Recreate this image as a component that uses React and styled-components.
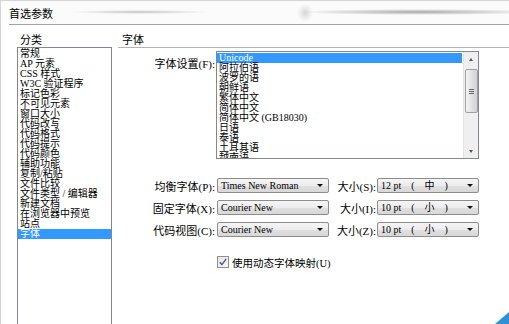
import React from "react"
import styled, { createGlobalStyle } from "styled-components"

const font = `"Liberation Serif", "Noto Sans CJK SC", serif`

const GlobalStyle = createGlobalStyle`
    body {
        margin: 0;
        background: #fff;
    }
`

const Dialog = styled.div`
    position: relative;
    width: 509px;
    height: 324px;
    box-sizing: border-box;
    overflow: hidden;
    border-top: 1px solid #d4d4d4;
    border-left: 1px solid #d4d4d4;
    font-family: ${font};
    font-size: 11px;
    color: #000;
    background: #fff;
`

const TitleBar = styled.div`
    height: 23px;
    margin-left: 8px;
    display: flex;
    align-items: center;
    border-bottom: 1px solid #a2a2a2;
    font-size: 11px;
    background:
        radial-gradient(ellipse 70px 2px at 130px 11px, #c4c4c4, transparent),
        radial-gradient(ellipse 120px 3px at 410px 11px, #a8a8a8, transparent),
        radial-gradient(ellipse 8px 9px at 296px 12px, #d8d8d8, transparent),
        #fbfbfb;
`

const Body = styled.div`
    display: flex;
    gap: 6px;
    padding-left: 16px;
`

const SideColumn = styled.div`
    width: 95px;
    display: flex;
    flex-direction: column;
`

const SectionLabel = styled.div`
    margin-top: 9px;
    height: 13px;
    line-height: 13px;
    padding-left: ${p => p.$indent}px;
    border-bottom: ${p => p.$rule ? "1px solid #b4b4b4" : "none"};
`

const ListBox = styled.div`
    box-sizing: border-box;
    border: 1px solid #828790;
    background: #fff;
    height: ${p => p.$height}px;
    width: ${p => p.$width ? p.$width + "px" : "auto"};
    display: flex;
    overflow: hidden;
`

const Items = styled.div`
    flex: 1;
    display: flex;
    flex-direction: column;
    padding-top: 1px;
`

const Item = styled.div`
    flex: none;
    height: 10px;
    line-height: 10px;
    font-size: 10px;
    padding-left: 2px;
    white-space: pre;
    color: ${p => p.$selected ? "#fff" : "#000"};
    background: ${p => p.$selected ? "#3399ff" : "transparent"};
    margin-right: ${p => p.$selected && p.$inset ? "1px" : "0"};
`

const MainColumn = styled.div`
    flex: 1;
    display: flex;
    flex-direction: column;
`

const Form = styled.div`
    display: flex;
    flex-direction: column;
`

const Row = styled.div`
    display: flex;
    align-items: ${p => p.$top ? "flex-start" : "center"};
    margin-top: ${p => p.$space}px;
    height: ${p => p.$height || 15}px;
`

const Label = styled.div`
    width: ${p => p.$width}px;
    text-align: right;
    white-space: nowrap;
    padding-top: ${p => p.$top ? 4 : 0}px;
    margin-right: ${p => p.$gap || 1}px;
`

const Select = styled.div`
    position: relative;
    box-sizing: border-box;
    width: ${p => p.$width}px;
    height: 15px;
    line-height: 13px;
    font-size: 10px;
    padding-left: 3px;
    border: 1px solid #8d8d8d;
    border-radius: 2px;
    white-space: pre;
    background: linear-gradient(#f6f6f6, #ececec 50%, #e0e0e0 51%, #d8d8d8);
    &::after {
        content: "";
        position: absolute;
        right: 5px;
        top: 5px;
        border-left: 3px solid transparent;
        border-right: 3px solid transparent;
        border-top: 3px solid #111;
    }
`

const Scrollbar = styled.div`
    width: 14px;
    display: flex;
    flex-direction: column;
    align-items: center;
    background: #efefef;
    border-left: 1px solid #e2e2e2;
`

const ArrowButton = styled.div`
    height: 14px;
    width: 14px;
    display: flex;
    align-items: center;
    justify-content: center;
    &::before {
        content: "";
        border-left: 2.5px solid transparent;
        border-right: 2.5px solid transparent;
        ${p => p.$down ? "border-top: 3px solid #555;" : "border-bottom: 3px solid #555;"}
    }
`

const Thumb = styled.div`
    box-sizing: border-box;
    margin-top: 3px;
    width: 13px;
    height: 44px;
    border: 1px solid #a0a0a0;
    border-radius: 2px;
    background: linear-gradient(to right, #f4f4f4, #e0e0e0 55%, #d2d2d2);
    display: flex;
    flex-direction: column;
    align-items: center;
    justify-content: center;
    gap: 1px;
    span {
        width: 5px;
        height: 1px;
        background: #666;
    }
`

const Track = styled.div`
    flex: 1;
`

const CheckRow = styled.label`
    display: flex;
    align-items: center;
    gap: 3px;
    margin-top: 19px;
    margin-left: 99px;
    height: 12px;
    font-size: 10.5px;
`

const Corner = styled.svg`
    position: absolute;
    right: 0;
    bottom: 0;
`

const categories = [
    "常规", "AP 元素", "CSS 样式", "W3C 验证程序", "标记色彩", "不可见元素",
    "窗口大小", "代码改写", "代码格式", "代码提示", "代码颜色", "辅助功能",
    "复制/粘贴", "文件比较", "文件类型 / 编辑器", "新建文档", "在浏览器中预览",
    "站点", "字体",
]

const encodings = [
    "Unicode", "阿拉伯语", "波罗的语", "朝鲜语", "繁体中文", "简体中文",
    "简体中文 (GB18030)", "日语", "泰语", "土耳其语", "越南语",
]

const fontRows = [
    { label: "均衡字体(P):", face: "Times New Roman", size: "大小(S):", value: "12 pt\u3000(\u3000中\u3000)" },
    { label: "固定字体(X):", face: "Courier New", size: "大小(I):", value: "10 pt\u3000(\u3000小\u3000)" },
    { label: "代码视图(C):", face: "Courier New", size: "大小(Z):", value: "10 pt\u3000(\u3000小\u3000)" },
]

const CheckBox = () =>
    <svg width="12" height="12" viewBox="0 0 12 12">
        <defs>
            <linearGradient id="cb" x1="0" y1="0" x2="1" y2="1">
                <stop offset="0" stopColor="#e4e4e4" />
                <stop offset="1" stopColor="#fafafa" />
            </linearGradient>
        </defs>
        <rect x="0.5" y="0.5" width="11" height="11" fill="url(#cb)" stroke="#8e8f8f" />
        <path d="M2.8 6.2 L4.9 8.6 L9.2 2.9" fill="none" stroke="#4b5f8c" strokeWidth="1.5" />
    </svg>

const App = () =>
    <>
    <GlobalStyle />
    <Dialog>
        <TitleBar>首选参数</TitleBar>
        <Body>
            <SideColumn>
                <SectionLabel $indent={3}>分类</SectionLabel>
                <ListBox $height={290}>
                    <Items>
                        {categories.map(c =>
                            <Item key={c} $selected={c === "字体"}>{c}</Item>
                        )}
                    </Items>
                </ListBox>
            </SideColumn>
            <MainColumn>
                <SectionLabel $indent={4} $rule>字体</SectionLabel>
                <Form>
                    <Row $top $space={3} $height={108}>
                        <Label $width={97} $top>字体设置(F):</Label>
                        <ListBox $height={108} $width={263}>
                            <Items>
                                {encodings.map(e =>
                                    <Item key={e} $selected={e === "Unicode"} $inset>{e}</Item>
                                )}
                            </Items>
                            <Scrollbar>
                                <ArrowButton />
                                <Thumb><span /><span /><span /></Thumb>
                                <Track />
                                <ArrowButton $down />
                            </Scrollbar>
                        </ListBox>
                    </Row>
                    {fontRows.map((r, i) =>
                        <Row key={r.label} $space={i === 0 ? 19 : 7}>
                            <Label $width={97} $gap={2}>{r.label}</Label>
                            <Select $width={112}>{r.face}</Select>
                            <Label $width={47} $gap={1}>{r.size}</Label>
                            <Select $width={102}>{r.value}</Select>
                        </Row>
                    )}
                    <CheckRow>
                        <CheckBox />
                        使用动态字体映射(U)
                    </CheckRow>
                </Form>
            </MainColumn>
        </Body>
        <Corner width="16" height="12" viewBox="0 0 16 12">
            <path d="M16 0 L16 12 L2 12 Z" fill="#2f8fd8" />
        </Corner>
    </Dialog>
    </>

export default App
